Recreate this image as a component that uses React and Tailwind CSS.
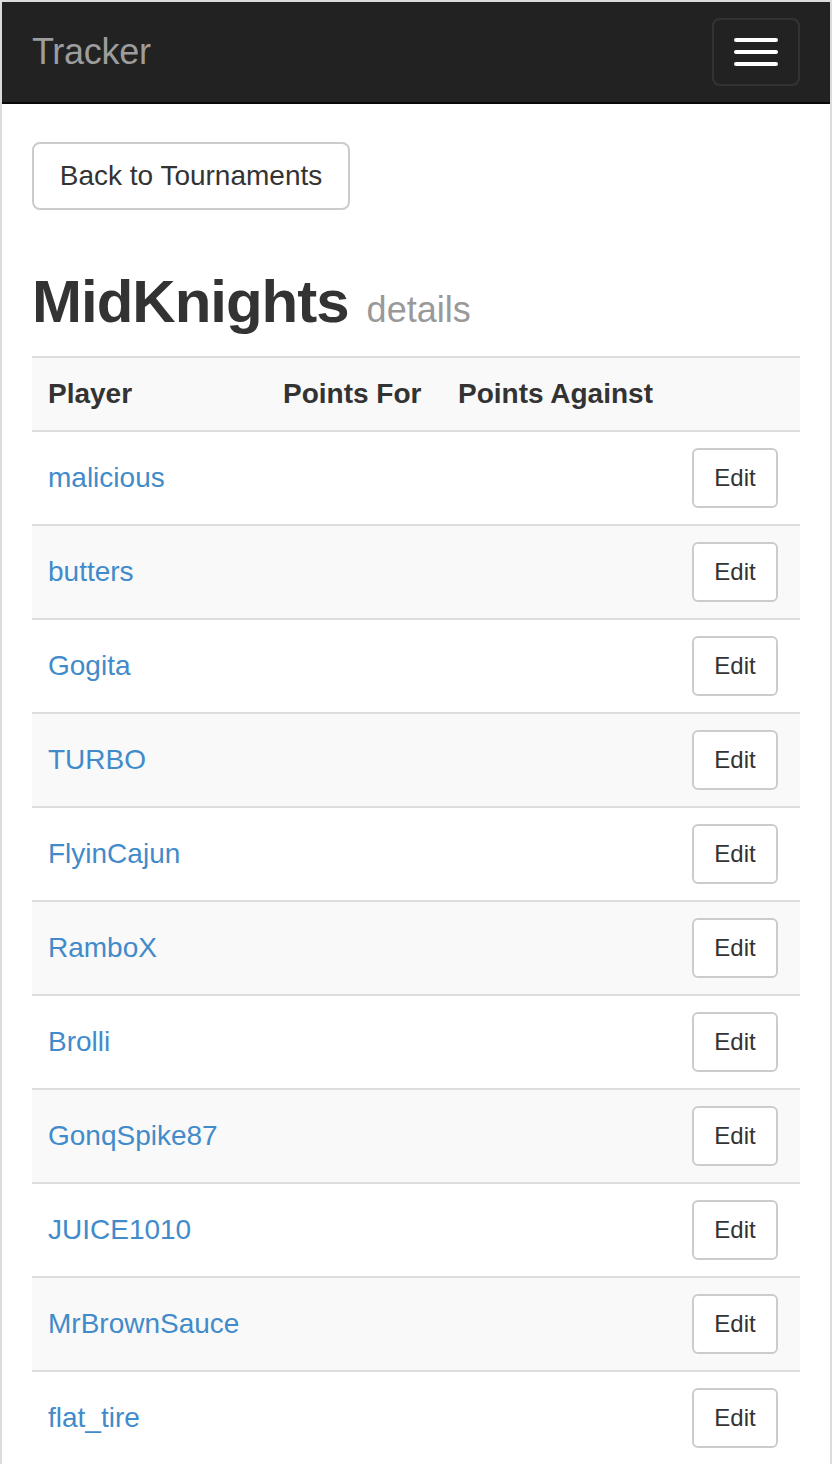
import React from 'react';

const players = [
  'malicious',
  'butters',
  'Gogita',
  'TURBO',
  'FlyinCajun',
  'RamboX',
  'Brolli',
  'GonqSpike87',
  'JUICE1010',
  'MrBrownSauce',
  'flat_tire',
];

export default function App() {
  return (
    <div
      className="min-h-[1464px] w-[832px] bg-white border-t-2 border-x-2 border-[#dcdcdc] overflow-hidden"
      style={{ fontFamily: '"Liberation Sans", Arial, sans-serif' }}
    >
      {/* Navbar */}
      <nav className="h-[102px] bg-[#222222] border-b-2 border-[#080808] flex items-center justify-between pl-[30px] pr-[30px]">
        <span className="text-[36px] leading-[40px] text-[#9d9d9d] tracking-[-0.3px]">Tracker</span>
        <button className="w-[88px] h-[68px] rounded-[8px] border-2 border-[#333333] flex flex-col items-center justify-center gap-[8px]">
          <span className="block w-[44px] h-[4px] rounded-[2px] bg-white" />
          <span className="block w-[44px] h-[4px] rounded-[2px] bg-white" />
          <span className="block w-[44px] h-[4px] rounded-[2px] bg-white" />
        </button>
      </nav>

      {/* Content */}
      <div className="px-[30px] pt-[38px]">
        <button className="h-[68px] w-[318px] border-2 border-[#cccccc] rounded-[8px] text-[28px] text-[#333333] bg-white">
          Back to Tournaments
        </button>

        <h2 className="mt-[59px] mb-[13px] flex items-baseline text-[#333333] font-bold text-[60px] leading-[66px] tracking-[-1px]">
          MidKnights
          <small className="ml-[18px] text-[36px] font-normal text-[#999999] tracking-normal">details</small>
        </h2>

        <table className="w-full border-collapse text-[28px] leading-[40px]">
          <thead>
            <tr className="bg-[#f9f9f9] border-t-2 border-b-2 border-[#dddddd]">
              <th className="w-[235px] px-[16px] py-[16px] text-left font-bold text-[#333333]">Player</th>
              <th className="w-[175px] px-[16px] py-[16px] text-left font-bold text-[#333333]">Points For</th>
              <th className="w-[234px] px-[16px] py-[16px] text-left font-bold text-[#333333]">Points Against</th>
              <th className="px-[16px] py-[16px]"></th>
            </tr>
          </thead>
          <tbody>
            {players.map((p, i) => (
              <tr key={p} className={`border-b-2 border-[#dddddd] ${i % 2 === 1 ? 'bg-[#f9f9f9]' : 'bg-white'}`}>
                <td className="px-[16px] py-[16px] align-middle">
                  <a href="#" className="text-[#428bca]">{p}</a>
                </td>
                <td className="px-[16px] py-[16px]"></td>
                <td className="px-[16px] py-[16px]"></td>
                <td className="pl-[16px] py-[16px] align-middle text-left">
                  <button className="h-[60px] w-[86px] border-2 border-[#cccccc] rounded-[6px] bg-white text-[24px] text-[#333333]">
                    Edit
                  </button>
                </td>
              </tr>
            ))}
          </tbody>
        </table>
      </div>
    </div>
  );
}
